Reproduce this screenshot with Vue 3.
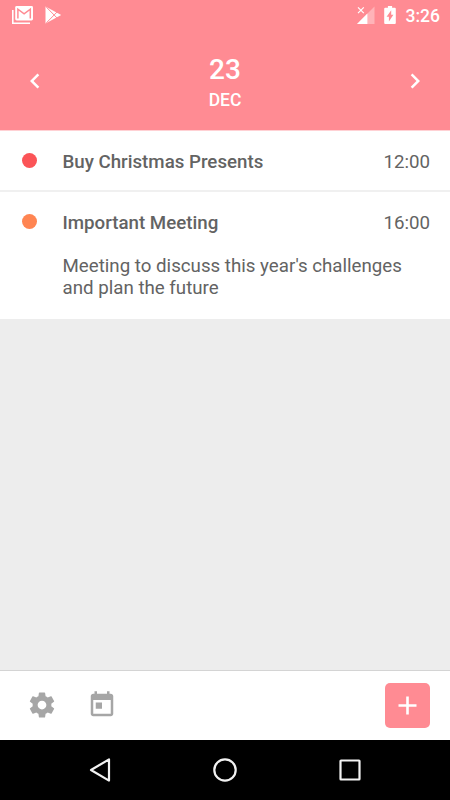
<script setup>
import { ref } from "vue";

const day = ref("23");
const month = ref("DEC");

const events = ref([
  {
    title: "Buy Christmas Presents",
    time: "12:00",
    color: "red",
    note: "",
  },
  {
    title: "Important Meeting",
    time: "16:00",
    color: "orange",
    note: "Meeting to discuss this year's challenges and plan the future",
  },
]);
</script>

<template>
  <main class="screen">
    <div class="status-bar">
      <svg class="mail" width="22" height="18" viewBox="0 0 22 18">
        <path d="M0.8 4V17.2H18" fill="none" stroke="#fff" stroke-width="1.6" />
        <rect x="3.2" y="0" width="17.8" height="14.4" rx="1.4" fill="#fff" />
        <path
          d="M5.9 12.6V3.2L12.1 7.8L18.3 3.2V12.6"
          fill="none"
          stroke="#ff8b93"
          stroke-width="1.5"
        />
      </svg>
      <svg class="play" width="17" height="18" viewBox="0 0 17 18">
        <path d="M0.5 0.4L11.5 6.4L16.2 9L11.5 11.6L0.5 17.6z" fill="#fff" />
        <path
          d="M1.4 1.2L12.2 12.1M1.4 16.8L12.2 5.9"
          stroke="#ff8b93"
          stroke-width="1"
        />
      </svg>
      <svg class="signal" width="18" height="18" viewBox="0 0 18 18">
        <path d="M17.5 0.5V18H0z" fill="#fff" opacity="0.35" />
        <path d="M10.4 7.6V18H0z" fill="#fff" />
        <path d="M1 1.3l5.8 5.8M6.8 1.3L1 7.1" stroke="#fff" stroke-width="1.2" />
      </svg>
      <svg class="battery" width="12" height="18" viewBox="0 0 12 18">
        <path
          d="M3.9 0h4.2v1.8h2.6q1.1 0 1.1 1v14.2q0 1-1 1h-9.6q-1 0-1-1v-14.2q0-1 1.1-1h2.6z"
          fill="#fff"
        />
        <path d="M7.2 4.3v4.5h2.2L4.9 15.6v-4.8H2.6z" fill="#ff8b93" />
      </svg>
      <span class="clock">3:26</span>
    </div>

    <header class="date-bar">
      <button class="arrow">
        <svg width="30" height="30" viewBox="0 0 24 24">
          <path d="M15.41 7.41L14 6l-6 6 6 6 1.41-1.41L10.83 12z" />
        </svg>
      </button>
      <div class="date">
        <span class="day">{{ day }}</span>
        <span class="month">{{ month }}</span>
      </div>
      <button class="arrow">
        <svg width="30" height="30" viewBox="0 0 24 24">
          <path d="M10 6L8.59 7.41 13.17 12l-4.58 4.59L10 18l6-6z" />
        </svg>
      </button>
    </header>

    <ul class="events">
      <li v-for="event in events" :key="event.time" class="event">
        <div class="event-head">
          <span :class="`dot ${event.color}`"></span>
          <span class="title">{{ event.title }}</span>
          <span class="time">{{ event.time }}</span>
        </div>
        <p v-if="event.note" class="note">{{ event.note }}</p>
      </li>
    </ul>

    <footer class="tools">
      <button class="tool">
        <svg width="30" height="30" viewBox="0 0 24 24">
          <path
            d="M19.43 12.98c.04-.32.07-.64.07-.98s-.03-.66-.07-.98l2.11-1.65c.19-.15.24-.42.12-.64l-2-3.46c-.12-.22-.39-.3-.61-.22l-2.49 1c-.52-.4-1.08-.73-1.69-.98l-.38-2.65C14.46 2.18 14.25 2 14 2h-4c-.25 0-.46.18-.49.42l-.38 2.65c-.61.25-1.17.59-1.69.98l-2.49-1c-.23-.09-.49 0-.61.22l-2 3.46c-.13.22-.07.49.12.64l2.11 1.65c-.04.32-.07.65-.07.98s.03.66.07.98l-2.11 1.65c-.19.15-.24.42-.12.64l2 3.46c.12.22.39.3.61.22l2.49-1c.52.4 1.08.73 1.69.98l.38 2.65c.03.24.24.42.49.42h4c.25 0 .46-.18.49-.42l.38-2.65c.61-.25 1.17-.59 1.69-.98l2.49 1c.23.09.49 0 .61-.22l2-3.46c.12-.22.07-.49-.12-.64l-2.11-1.65zM12 15.5c-1.93 0-3.5-1.57-3.5-3.5s1.57-3.5 3.5-3.5 3.5 1.57 3.5 3.5-1.57 3.5-3.5 3.5z"
          />
        </svg>
      </button>
      <button class="tool">
        <svg width="30" height="30" viewBox="0 0 24 24">
          <path
            d="M19 3h-1V1h-2v2H8V1H6v2H5c-1.11 0-1.99.9-1.99 2L3 19c0 1.1.89 2 2 2h14c1.1 0 2-.9 2-2V5c0-1.1-.9-2-2-2zm0 16H5V8h14v11zM7 10h5v5H7z"
          />
        </svg>
      </button>
      <button class="add">
        <svg width="29" height="29" viewBox="0 0 29 29">
          <path d="M14.5 5.5v18M5.5 14.5h18" />
        </svg>
      </button>
    </footer>

    <nav class="nav-bar">
      <svg width="30" height="30" viewBox="0 0 30 30">
        <path d="M24 4.4V25.6L6 15z" />
      </svg>
      <svg width="30" height="30" viewBox="0 0 30 30">
        <circle cx="15" cy="15" r="10.7" />
      </svg>
      <svg width="30" height="30" viewBox="0 0 30 30">
        <rect x="5.5" y="5.5" width="19" height="19" rx="0.5" />
      </svg>
    </nav>
  </main>
</template>

<style>
body {
  margin: 0;
}
</style>

<style scoped>
.screen {
  display: flex;
  flex-direction: column;
  height: 800px;
  width: 450px;
  overflow: hidden;
  background-color: #ededed;
  font-family: Roboto, "Liberation Sans", sans-serif;
}

button {
  display: flex;
  align-items: center;
  justify-content: center;
  border: none;
  background: none;
  padding: 0;
  cursor: pointer;
}

svg {
  display: block;
}

.status-bar {
  display: flex;
  align-items: center;
  box-sizing: border-box;
  height: 30px;
  padding: 0 10px 0 12px;
  background-color: #ff8b93;
}

.play {
  margin-left: 10.5px;
}

.signal {
  margin-left: auto;
}

.battery {
  margin-left: 9.5px;
}

.clock {
  margin-left: 9.5px;
  color: #fff;
  font-size: 17.5px;
  font-weight: 500;
  line-height: 30px;
  padding-top: 1px;
}

.date-bar {
  display: flex;
  align-items: center;
  justify-content: space-between;
  box-sizing: border-box;
  height: 101px;
  padding: 1px 20px 0;
  background-color: #ff8b93;
  border-bottom: 1px solid #ffd1d4;
}

.arrow svg {
  fill: #fff;
}

.date {
  display: flex;
  flex-direction: column;
  align-items: center;
  padding-top: 5px;
  color: #fff;
  font-weight: 500;
}

.day {
  font-size: 28px;
  line-height: 33px;
}

.month {
  font-size: 17.5px;
  line-height: 28px;
}

.events {
  flex: 1;
  margin: 0;
  padding: 0;
  list-style: none;
}

.event {
  background-color: #fff;
  color: #636363;
  font-size: 18.72px;
}

.event + .event {
  border-top: 2px solid #f0f0f0;
}

.event-head {
  display: flex;
  align-items: center;
  height: 59px;
  padding: 0 20px 0 22.4px;
}

.dot {
  width: 15px;
  height: 15px;
  border-radius: 50%;
}

.red {
  background-color: #fb5457;
}

.orange {
  background-color: #ff8552;
}

.title {
  flex: 1;
  margin-left: 25.1px;
  padding-top: 2px;
  font-weight: 500;
}

.time {
  padding-top: 2px;
}

.note {
  margin: 0;
  padding: 4px 40px 20px 62.5px;
  line-height: 22px;
}

.tools {
  display: flex;
  align-items: center;
  box-sizing: border-box;
  height: 70px;
  padding: 0 20px 1px 27.2px;
  background-color: #fff;
  border-top: 1px solid #d4d4d4;
}

.tool {
  margin-right: 30px;
}

.tool svg {
  fill: #a6a6a6;
}

.add {
  width: 45px;
  height: 45px;
  margin-left: auto;
  border-radius: 5px;
  background-color: #ff8b93;
}

.add svg {
  stroke: #fff;
  stroke-width: 2.6;
}

.nav-bar {
  display: flex;
  align-items: center;
  justify-content: space-between;
  height: 60px;
  padding: 0 85px;
  background-color: #000;
}

.nav-bar svg {
  fill: none;
  stroke: #f2f2f2;
  stroke-width: 2.2;
  stroke-linejoin: round;
}
</style>
